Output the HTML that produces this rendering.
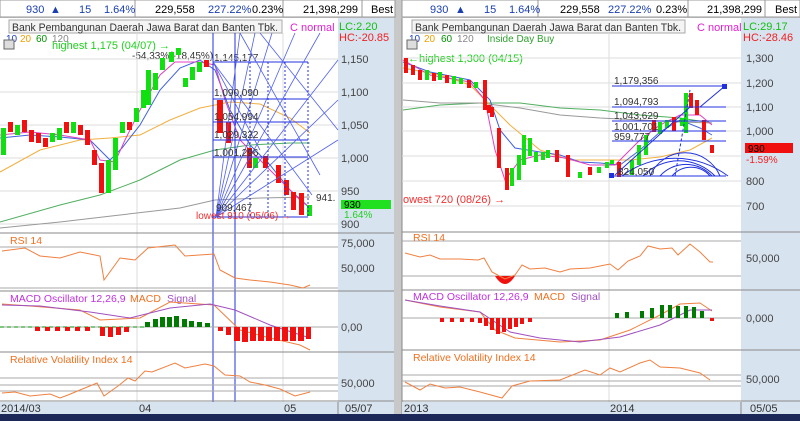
<!DOCTYPE html>
<html><head><meta charset="utf-8"><style>
html,body{margin:0;padding:0;width:800px;height:421px;overflow:hidden;background:#c8c8c8}
svg{display:block;font-family:"Liberation Sans",sans-serif}
</style></head><body>
<svg width="800" height="421" viewBox="0 0 800 421" xmlns="http://www.w3.org/2000/svg">
<rect width="800" height="421" fill="#c8c8c8"/>
<!-- LEFT PANEL -->
<g>
<rect x="0" y="0" width="395" height="17" fill="#fff" stroke="#999"/>
<line x1="135" y1="0" x2="135" y2="17" stroke="#999"/><line x1="283" y1="0" x2="283" y2="17" stroke="#999"/><line x1="362" y1="0" x2="362" y2="17" stroke="#999"/>
<g font-size="11">
<text x="26" y="13" fill="#1a3fb0">930</text><text x="50" y="13" fill="#1a3fb0">▲</text><text x="79" y="13" fill="#1a3fb0">15</text><text x="104" y="13" fill="#1a3fb0">1.64%</text>
<text x="155" y="13">229,558</text><text x="208" y="13" fill="#1a3fb0">227.22%</text><text x="252" y="13">0.23%</text>
<text x="303" y="13">21,398,299</text><text x="371" y="13">Best</text>
</g>
<rect x="0" y="18" width="338" height="384" fill="#fff"/>
<rect x="338" y="18" width="56" height="384" fill="#d8e3f0"/>
<rect x="9" y="20" width="273" height="13" fill="#f4f4f4" stroke="#aaa"/>
<text x="12" y="31" font-size="11" fill="#333" textLength="266" lengthAdjust="spacingAndGlyphs">Bank Pembangunan Daerah Jawa Barat dan Banten Tbk.</text>
<text x="290" y="31" font-size="11" fill="#e020d0">C normal</text>
<text x="339" y="30" font-size="11" fill="#10c010">LC:2.20</text>
<text x="339" y="41" font-size="11" fill="#f02020">HC:-20.85</text>
<text x="6" y="42" font-size="10" fill="#2040c0">10</text><text x="20" y="42" font-size="10" fill="#f0a000">20</text><text x="36" y="42" font-size="10" fill="#009000">60</text><text x="52" y="42" font-size="10" fill="#888">120</text>
<rect x="4" y="40" width="10" height="9" fill="#ddd" stroke="#666"/>
<text x="52" y="49" font-size="11" fill="#20d020">highest 1,175 (04/07) →</text>
<text x="132" y="59" font-size="10" fill="#333">-54,33%(-18,45%)</text>
<text x="214" y="61" font-size="10" fill="#333">1,145,177</text>
<g stroke="#ddd" stroke-width="1">
<line x1="0" y1="59" x2="338" y2="59"/><line x1="0" y1="92" x2="338" y2="92"/><line x1="0" y1="125" x2="338" y2="125"/><line x1="0" y1="158" x2="338" y2="158"/><line x1="0" y1="191" x2="338" y2="191"/><line x1="0" y1="224" x2="338" y2="224"/>
<line x1="137" y1="33" x2="137" y2="402"/><line x1="283" y1="33" x2="283" y2="402"/>
</g>
<g font-size="11" fill="#444">
<text x="341" y="63">1,150</text><text x="341" y="96">1,100</text><text x="341" y="129">1,050</text><text x="341" y="162">1,000</text><text x="341" y="195">950</text><text x="341" y="228">900</text>
</g>
<rect x="341" y="200" width="50" height="9" fill="#20e020"/><text x="344" y="208" font-size="10">930</text><text x="344" y="218" font-size="10" fill="#20d020">1.64%</text>
<polyline fill="none" stroke="#f0b040" stroke-width="1" points="0,172 40,150 80,140 110,138 140,135 170,120 200,108 230,102 260,104 290,118 310,133"/>
<polyline fill="none" stroke="#50b060" stroke-width="1" points="0,222 60,205 100,195 140,180 180,160 215,150 250,145 290,143 310,143"/>
<polyline fill="none" stroke="#999" stroke-width="1" points="0,228 60,222 120,215 180,208 215,200 260,198 310,197"/>
<polyline fill="none" stroke="#4060e0" stroke-width="1" points="0,138 30,135 60,137 90,140 100,150 110,160 122,148 140,125 160,90 180,68 200,60 215,70 230,110 250,145 270,165 290,190 310,208"/>
<polyline fill="none" stroke="#e040c0" stroke-width="1" points="0,135 30,132 60,135 90,140 100,160 115,162 125,140 140,110 160,75 175,62 200,62 215,65 225,100 240,140 260,160 280,180 300,200 310,208"/>
<g>
<g fill="#10e010">
<rect x="1" y="128" width="5" height="27"/><rect x="15" y="125" width="5" height="10"/><rect x="50" y="133" width="5" height="9"/><rect x="57" y="128" width="5" height="12"/><rect x="71" y="122" width="5" height="11"/><rect x="106" y="160" width="5" height="33"/><rect x="113" y="138" width="5" height="32"/><rect x="120" y="122" width="5" height="11"/><rect x="134" y="108" width="5" height="14"/><rect x="141" y="90" width="5" height="18"/><rect x="146" y="70" width="5" height="35"/><rect x="153" y="73" width="5" height="17"/><rect x="160" y="58" width="5" height="12"/><rect x="169" y="52" width="5" height="10"/><rect x="176" y="48" width="5" height="7"/><rect x="183" y="78" width="5" height="9"/><rect x="190" y="67" width="5" height="13"/><rect x="197" y="62" width="5" height="10"/><rect x="253" y="158" width="5" height="10"/><rect x="307" y="205" width="5" height="11"/>
</g>
<g fill="#f01010">
<rect x="8" y="122" width="5" height="10"/><rect x="22" y="120" width="5" height="12"/><rect x="29" y="130" width="5" height="12"/><rect x="36" y="133" width="5" height="10"/><rect x="43" y="138" width="5" height="9"/><rect x="64" y="122" width="5" height="11"/><rect x="78" y="125" width="5" height="10"/><rect x="85" y="130" width="5" height="15"/><rect x="92" y="150" width="5" height="15"/><rect x="99" y="163" width="5" height="30"/><rect x="127" y="122" width="5" height="8"/><rect x="204" y="60" width="5" height="7"/><rect x="217" y="100" width="6" height="33"/><rect x="226" y="122" width="5" height="21"/><rect x="247" y="148" width="5" height="20"/><rect x="263" y="156" width="5" height="12"/><rect x="276" y="165" width="5" height="18"/><rect x="284" y="180" width="5" height="15"/><rect x="291" y="192" width="5" height="18"/><rect x="299" y="193" width="5" height="22"/>
</g>
</g>
<g stroke="#2030e0" stroke-width="1" fill="none">
<line x1="213" y1="33" x2="213" y2="402"/><line x1="235" y1="33" x2="235" y2="402"/>
<line x1="213" y1="62" x2="308" y2="62"/><line x1="213" y1="99" x2="308" y2="99"/><line x1="213" y1="122" x2="308" y2="122"/><line x1="213" y1="140" x2="308" y2="140"/><line x1="213" y1="157" x2="308" y2="157"/><line x1="213" y1="217" x2="308" y2="217"/>
<g stroke-dasharray="2,2"><line x1="250" y1="62" x2="250" y2="217"/><line x1="268" y1="62" x2="268" y2="217"/><line x1="285" y1="62" x2="285" y2="217"/><line x1="308" y1="62" x2="308" y2="217"/></g>
<g stroke="#5060f0" stroke-width="0.8">
<line x1="216" y1="217" x2="240" y2="33"/><line x1="216" y1="217" x2="255" y2="33"/><line x1="216" y1="217" x2="272" y2="33"/><line x1="216" y1="217" x2="295" y2="33"/><line x1="216" y1="217" x2="320" y2="33"/><line x1="216" y1="217" x2="338" y2="60"/><line x1="216" y1="217" x2="338" y2="100"/><line x1="216" y1="217" x2="338" y2="140"/>
<line x1="213" y1="62" x2="312" y2="195"/><line x1="240" y1="33" x2="320" y2="175"/><line x1="260" y1="33" x2="338" y2="130"/><line x1="213" y1="62" x2="260" y2="150"/>
</g>
</g>
<g font-size="10" fill="#333"><text x="214" y="96">1,090,090</text><text x="214" y="120">1,054,994</text><text x="214" y="138">1,029,322</text><text x="214" y="156">1,001,296</text><text x="316" y="201">941.</text><text x="216" y="211">909,467</text></g>
<text x="196" y="219" font-size="10" fill="#f03030">lowest 910 (05/06) →</text>
<g stroke="#888"><line x1="0" y1="233" x2="394" y2="233"/><line x1="0" y1="291" x2="394" y2="291"/><line x1="0" y1="352" x2="394" y2="352"/><line x1="0" y1="401" x2="394" y2="401"/></g>
<g stroke="#aaa"><line x1="0" y1="247" x2="338" y2="247"/><line x1="0" y1="288" x2="338" y2="288"/><line x1="0" y1="327" x2="338" y2="327"/><line x1="0" y1="378" x2="338" y2="378"/><line x1="0" y1="385" x2="338" y2="385"/><line x1="0" y1="391" x2="338" y2="391"/></g>
<g font-size="10.5"><text x="10" y="244" fill="#f07020">RSI 14</text><text x="10" y="302" fill="#c030e0">MACD Oscillator 12,26,9</text><text x="130" y="302" fill="#f07020">MACD</text><text x="167" y="302" fill="#a050c0">Signal</text><text x="10" y="363" fill="#f07020">Relative Volatility Index 14</text></g>
<g font-size="11" fill="#444"><text x="341" y="247">75,000</text><text x="341" y="272">50,000</text><text x="341" y="331">0,00</text><text x="341" y="387">50,000</text></g>
<polyline fill="none" stroke="#f08040" points="2,251 25,248 40,256 60,258 80,252 100,256 104,280 120,258 135,260 148,248 175,245 185,256 214,254 220,270 235,278 250,280 270,282 290,285 303,288 310,285"/>
<polyline fill="none" stroke="#f08040" points="2,304 30,306 80,310 100,320 140,318 170,302 214,305 240,330 270,338 300,345 310,350"/>
<polyline fill="none" stroke="#a050c0" points="2,305 40,306 90,312 130,318 170,308 210,304 235,310 270,325 310,338"/>
<line x1="0" y1="327" x2="145" y2="327" stroke="#009000" stroke-dasharray="4,3"/>
<g fill="#f01010"><rect x="35" y="327" width="5" height="4"/><rect x="45" y="327" width="5" height="4"/><rect x="55" y="327" width="5" height="4"/><rect x="65" y="327" width="5" height="4"/><rect x="75" y="327" width="5" height="4"/><rect x="85" y="327" width="5" height="4"/><rect x="100" y="327" width="5" height="9"/><rect x="108" y="327" width="5" height="10"/><rect x="116" y="327" width="5" height="8"/><rect x="124" y="327" width="5" height="5"/><rect x="218" y="327" width="5" height="4"/><rect x="226" y="327" width="5" height="8"/><rect x="234" y="327" width="6" height="14"/><rect x="242" y="327" width="6" height="15"/><rect x="250" y="327" width="6" height="14"/><rect x="258" y="327" width="6" height="14"/><rect x="266" y="327" width="6" height="14"/><rect x="274" y="327" width="6" height="14"/><rect x="282" y="327" width="6" height="14"/><rect x="290" y="327" width="6" height="14"/><rect x="298" y="327" width="6" height="14"/><rect x="306" y="327" width="5" height="12"/></g>
<g fill="#007a00"><rect x="145" y="322" width="5" height="5"/><rect x="153" y="319" width="5" height="8"/><rect x="160" y="317" width="5" height="10"/><rect x="167" y="317" width="5" height="10"/><rect x="174" y="316" width="5" height="11"/><rect x="182" y="319" width="5" height="8"/><rect x="189" y="321" width="5" height="6"/><rect x="197" y="322" width="5" height="5"/><rect x="205" y="323" width="5" height="4"/></g>
<polyline fill="none" stroke="#f08040" points="2,393 15,392 30,396 50,394 60,398 68,395 80,390 97,383 104,396 118,386 128,378 135,381 145,371 152,372 175,363 185,368 205,364 214,366 225,375 240,376 250,382 265,385 280,389 295,396 310,392"/>
<rect x="0" y="402" width="394" height="12" fill="#d8e3f0"/>
<line x1="338" y1="402" x2="338" y2="414" stroke="#888"/>
<g font-size="11" fill="#333"><text x="1" y="412">2014/03</text><text x="139" y="412">04</text><text x="284" y="412">05</text><text x="345" y="412">05/07</text></g>
</g>
<!-- RIGHT PANEL -->
<g>
<rect x="402" y="0" width="398" height="17" fill="#fff" stroke="#999"/>
<line x1="538" y1="0" x2="538" y2="17" stroke="#999"/><line x1="688" y1="0" x2="688" y2="17" stroke="#999"/><line x1="765" y1="0" x2="765" y2="17" stroke="#999"/>
<g font-size="11">
<text x="430" y="13" fill="#1a3fb0">930</text><text x="455" y="13" fill="#1a3fb0">▲</text><text x="484" y="13" fill="#1a3fb0">15</text><text x="509" y="13" fill="#1a3fb0">1.64%</text>
<text x="560" y="13">229,558</text><text x="608" y="13" fill="#1a3fb0">227.22%</text><text x="656" y="13">0.23%</text>
<text x="707" y="13">21,398,299</text><text x="775" y="13">Best</text>
</g>
<rect x="402" y="18" width="339" height="384" fill="#fff"/>
<rect x="741" y="18" width="59" height="384" fill="#d8e3f0"/>
<line x1="402" y1="18" x2="402" y2="414" stroke="#888"/>
<rect x="412" y="20" width="273" height="13" fill="#f4f4f4" stroke="#aaa"/>
<text x="415" y="31" font-size="11" fill="#333" textLength="266" lengthAdjust="spacingAndGlyphs">Bank Pembangunan Daerah Jawa Barat dan Banten Tbk.</text>
<text x="697" y="31" font-size="11" fill="#e020d0">C normal</text>
<text x="743" y="30" font-size="11" fill="#10c010">LC:29.17</text>
<text x="743" y="41" font-size="11" fill="#f02020">HC:-28.46</text>
<text x="409" y="42" font-size="10" fill="#2040c0">10</text><text x="424" y="42" font-size="10" fill="#f0a000">20</text><text x="441" y="42" font-size="10" fill="#009000">60</text><text x="457" y="42" font-size="10" fill="#888">120</text><text x="487" y="42" font-size="10" fill="#30a030">Inside Day Buy</text>
<rect x="407" y="40" width="10" height="9" fill="#ddd" stroke="#666"/>
<text x="408" y="62" font-size="11" fill="#20d020">←highest 1,300 (04/15)</text>
<g stroke="#ddd"><line x1="402" y1="58" x2="741" y2="58"/><line x1="402" y1="83" x2="741" y2="83"/><line x1="402" y1="107" x2="741" y2="107"/><line x1="402" y1="131" x2="741" y2="131"/><line x1="402" y1="156" x2="741" y2="156"/><line x1="402" y1="181" x2="741" y2="181"/><line x1="402" y1="206" x2="741" y2="206"/><line x1="609" y1="33" x2="609" y2="402"/></g>
<g font-size="11" fill="#444"><text x="746" y="62">1,300</text><text x="746" y="87">1,200</text><text x="746" y="111">1,100</text><text x="746" y="135">1,000</text><text x="746" y="185">800</text><text x="746" y="210">700</text></g>
<rect x="745" y="143" width="48" height="10" fill="#f01010"/><text x="748" y="152" font-size="10">930</text><text x="746" y="163" font-size="10" fill="#f02020">-1.59%</text>
<polyline fill="none" stroke="#50b060" points="403,110 440,105 480,103 520,103 560,108 600,110 640,115 680,118 712,123"/>
<polyline fill="none" stroke="#999" points="403,100 440,103 480,103 520,108 560,115 600,118 640,120 680,122 712,123"/>
<polyline fill="none" stroke="#f0b040" points="403,68 440,75 470,85 490,105 510,125 540,150 570,160 600,160 630,160 660,157 690,150 712,138"/>
<polyline fill="none" stroke="#4060e0" points="403,62 430,72 470,80 490,100 500,130 515,148 540,152 560,155 580,162 600,163 620,165 640,150 660,132 680,120 700,128 712,135"/>
<polyline fill="none" stroke="#e040c0" points="403,60 430,75 470,82 485,100 495,150 505,180 520,160 540,155 565,158 590,165 615,165 640,140 660,125 680,115 700,115 712,125"/>
<g fill="#f01010"><rect x="404" y="58" width="4" height="15"/><rect x="411" y="65" width="4" height="10"/><rect x="418" y="70" width="4" height="10"/><rect x="432" y="73" width="4" height="8"/><rect x="445" y="75" width="4" height="8"/><rect x="467" y="80" width="4" height="8"/><rect x="483" y="80" width="4" height="30"/><rect x="487" y="105" width="4" height="8"/><rect x="490" y="107" width="4" height="10"/><rect x="497" y="128" width="4" height="40"/><rect x="505" y="168" width="4" height="22"/><rect x="555" y="150" width="4" height="12"/><rect x="566" y="155" width="4" height="22"/><rect x="588" y="167" width="4" height="8"/><rect x="617" y="162" width="4" height="15"/><rect x="652" y="120" width="4" height="12"/><rect x="672" y="117" width="4" height="14"/><rect x="689" y="93" width="4" height="15"/><rect x="695" y="100" width="4" height="15"/><rect x="702" y="120" width="4" height="20"/><rect x="710" y="145" width="4" height="8"/></g>
<g fill="#10e010"><rect x="425" y="70" width="4" height="10"/><rect x="438" y="72" width="4" height="8"/><rect x="452" y="76" width="4" height="8"/><rect x="459" y="78" width="4" height="6"/><rect x="474" y="82" width="4" height="6"/><rect x="510" y="168" width="4" height="18"/><rect x="517" y="155" width="4" height="25"/><rect x="522" y="135" width="4" height="30"/><rect x="528" y="138" width="4" height="18"/><rect x="534" y="152" width="4" height="10"/><rect x="541" y="152" width="4" height="8"/><rect x="546" y="150" width="4" height="8"/><rect x="578" y="172" width="4" height="6"/><rect x="597" y="167" width="4" height="6"/><rect x="605" y="162" width="4" height="6"/><rect x="610" y="160" width="4" height="4"/><rect x="630" y="160" width="4" height="15"/><rect x="637" y="145" width="4" height="20"/><rect x="644" y="135" width="4" height="20"/><rect x="658" y="122" width="4" height="12"/><rect x="665" y="120" width="4" height="8"/><rect x="680" y="118" width="4" height="8"/><rect x="684" y="93" width="4" height="40"/></g>
<g stroke="#2030e0" fill="none">
<line x1="612" y1="86" x2="726" y2="86"/><line x1="612" y1="107" x2="726" y2="107"/><line x1="612" y1="121" x2="726" y2="121"/><line x1="612" y1="131" x2="726" y2="131"/><line x1="612" y1="141" x2="726" y2="141"/><line x1="612" y1="176" x2="726" y2="176"/>
<polyline points="615,175 690,107 700,107 725,86"/>
<path d="M622,176 A88,88 0 0 1 728,176"/><path d="M643,176 A50,50 0 0 1 715,176"/><path d="M660,176 A35,35 0 0 1 712,176"/><path d="M672,176 A25,25 0 0 1 710,176"/><path d="M650,176 A38,38 0 0 1 720,176"/>
<line x1="675" y1="176" x2="690" y2="90" stroke-dasharray="3,2"/>
</g>
<rect x="609" y="173" width="5" height="5" fill="#2030e0"/><rect x="722" y="84" width="5" height="5" fill="#2030e0"/>
<g font-size="10" fill="#333"><text x="614" y="84">1,179,356</text><text x="614" y="105">1,094,793</text><text x="614" y="119">1,043,629</text><text x="614" y="130">1,001,701</text><text x="614" y="140">959,777</text><text x="618" y="175">824,050</text></g>
<text x="403" y="203" font-size="11" fill="#f03030">owest 720 (08/26) →</text>
<g stroke="#888"><line x1="402" y1="232" x2="800" y2="232"/><line x1="402" y1="290" x2="800" y2="290"/><line x1="402" y1="350" x2="800" y2="350"/><line x1="402" y1="401" x2="800" y2="401"/></g>
<g stroke="#aaa"><line x1="402" y1="241" x2="741" y2="241"/><line x1="402" y1="276" x2="741" y2="276"/><line x1="402" y1="318" x2="741" y2="318"/><line x1="402" y1="375" x2="741" y2="375"/><line x1="402" y1="381" x2="741" y2="381"/><line x1="402" y1="386" x2="741" y2="386"/></g>
<g font-size="10.5"><text x="413" y="241" fill="#f07020">RSI 14</text><text x="413" y="300" fill="#c030e0">MACD Oscillator 12,26,9</text><text x="534" y="300" fill="#f07020">MACD</text><text x="571" y="300" fill="#a050c0">Signal</text><text x="413" y="361" fill="#f07020">Relative Volatility Index 14</text></g>
<g font-size="11" fill="#444"><text x="746" y="262">50,000</text><text x="746" y="322">0,000</text><text x="746" y="383">50,000</text></g>
<path d="M495,276 Q505,292 515,276 Z" fill="#f01010"/>
<polyline fill="none" stroke="#f08040" points="405,253 420,257 430,255 440,259 460,259 478,260 484,258 492,272 505,279 515,275 522,265 530,269 545,268 560,272 570,269 590,268 610,264 618,270 628,261 640,256 648,246 660,249 672,248 678,255 690,244 700,252 710,262 713,262"/>
<polyline fill="none" stroke="#f08040" points="405,300 440,307 480,312 495,330 515,338 560,342 600,340 630,330 660,315 680,304 700,303 712,311"/>
<polyline fill="none" stroke="#a050c0" points="405,300 440,306 480,312 495,322 510,332 540,338 580,342 620,337 660,325 690,310 712,310"/>
<g fill="#f01010"><rect x="440" y="318" width="4" height="4"/><rect x="450" y="318" width="4" height="4"/><rect x="460" y="318" width="4" height="4"/><rect x="470" y="318" width="4" height="4"/><rect x="478" y="318" width="4" height="5"/><rect x="484" y="318" width="4" height="8"/><rect x="490" y="318" width="4" height="12"/><rect x="496" y="318" width="4" height="16"/><rect x="502" y="318" width="4" height="14"/><rect x="508" y="318" width="4" height="11"/><rect x="514" y="318" width="4" height="9"/><rect x="520" y="318" width="4" height="6"/><rect x="528" y="318" width="4" height="4"/><rect x="710" y="318" width="4" height="3"/></g>
<g fill="#007a00"><rect x="615" y="313" width="4" height="5"/><rect x="625" y="312" width="4" height="6"/><rect x="640" y="311" width="4" height="7"/><rect x="650" y="308" width="4" height="10"/><rect x="660" y="305" width="4" height="13"/><rect x="668" y="305" width="4" height="13"/><rect x="676" y="306" width="4" height="12"/><rect x="684" y="306" width="4" height="12"/><rect x="692" y="307" width="4" height="11"/><rect x="700" y="311" width="4" height="7"/></g>
<polyline fill="none" stroke="#f08040" points="405,382 420,390 430,384 445,388 460,387 480,392 502,398 512,386 530,381 560,380 585,370 600,375 610,368 620,372 640,363 650,360 660,367 680,368 700,373 710,380"/>
<rect x="402" y="402" width="398" height="12" fill="#d8e3f0"/>
<line x1="741" y1="402" x2="741" y2="414" stroke="#888"/>
<g font-size="11" fill="#333"><text x="404" y="412">2013</text><text x="610" y="412">2014</text><text x="750" y="412">05/05</text></g>
</g>
<rect x="0" y="414" width="800" height="7" fill="#1c2858"/>
</svg>
</body></html>
